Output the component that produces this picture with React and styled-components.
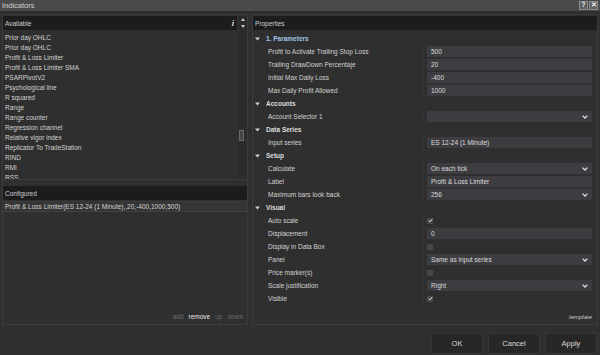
import React from 'react';
import styled, { createGlobalStyle } from 'styled-components';

const Global = createGlobalStyle`
  html, body { margin: 0; padding: 0; background: #2f2f2f; }
  body { font-family: "Liberation Sans", Arial, sans-serif; }
  * { box-sizing: border-box; }
`;

const Window = styled.div`
  width: 600px;
  height: 355px;
  background: #2f2f2f;
  display: flex;
  flex-direction: column;
  overflow: hidden;
  color: #d2d2d2;
  font-size: 6.5px;
`;

const TitleBar = styled.div`
  height: 11px;
  background: #4a4a4a;
  display: flex;
  align-items: center;
  justify-content: space-between;
  padding: 0 2px 0 2px;
`;

const Title = styled.span`
  font-size: 7.5px;
  color: #d2d2d2;
`;

const TitleButtons = styled.div`
  display: flex;
  gap: 1px;
`;

const TitleBtn = styled.div`
  width: 9px;
  height: 9px;
  border: 1px solid #8c8c8c;
  background: #5e5e5e;
  color: #f0f0f0;
  font-size: 6.5px;
  font-weight: bold;
  display: flex;
  align-items: center;
  justify-content: center;
  line-height: 1;
`;

const Main = styled.div`
  display: flex;
  gap: 4px;
  padding: 3px 2px 0 2px;
  height: 314px;
`;

const Panel = styled.div`
  width: ${(p) => p.$w}px;
  border: 1px solid #3b3b3b;
  display: flex;
  flex-direction: column;
  padding: 1px 0 0 0;
`;

const HeaderBar = styled.div`
  height: 14px;
  flex: ${(p) => (p.$grow ? 1 : 'none')};
  background: #1c1c1c;
  color: #cfcfcf;
  display: flex;
  align-items: center;
  justify-content: space-between;
  padding: 0 3px 0 2px;
`;

const HeaderRow = styled.div`
  display: flex;
  gap: 2px;
  height: 14px;
`;

const InfoGlyph = styled.span`
  font-style: italic;
  font-family: "Liberation Serif", serif;
  font-weight: bold;
  font-size: 8px;
  color: #e0e0e0;
`;

const Spinner = styled.div`
  width: 8px;
  display: flex;
  flex-direction: column;
  align-items: center;
  justify-content: space-around;
  background: #2a2a2a;
`;

const ListArea = styled.div`
  height: 150px;
  display: flex;
  border-bottom: 1px solid #3a3a3a;
`;

const ListItems = styled.div`
  flex: 1;
  overflow: hidden;
  padding: 3px 0 0 2px;
`;

const ListItem = styled.div`
  height: 10px;
  line-height: 10px;
  white-space: nowrap;
`;

const ScrollTrack = styled.div`
  width: 9px;
  background: #2c2c2c;
  position: relative;
`;

const ScrollThumb = styled.div`
  position: absolute;
  left: 1px;
  top: 100px;
  width: 5px;
  height: 11px;
  border: 1px solid #6a6a6a;
  background: #444;
`;

const ConfiguredHeader = styled(HeaderBar)`
  margin-top: 6px;
`;

const ConfiguredBox = styled.div`
  flex: 1;
  margin-top: 1px;
  border-top: 1px solid #3a3a3a;
  display: flex;
  flex-direction: column;
`;

const ConfiguredItem = styled.div`
  height: 10px;
  line-height: 10px;
  padding-left: 2px;
  background: #353535;
  border-bottom: 1px solid #414141;
  white-space: nowrap;
`;

const ActionRow = styled.div`
  margin-top: auto;
  display: flex;
  justify-content: flex-end;
  gap: 5px;
  padding: 0 4px 4px 0;
`;

const Action = styled.span`
  color: ${(p) => (p.$active ? '#e6e6e6' : '#6c6c6c')};
`;

const PropGrid = styled.div`
  display: flex;
  flex-direction: column;
  padding-top: 2px;
`;

const Row = styled.div`
  height: 13px;
  display: grid;
  grid-template-columns: 170px 1fr;
`;

const CatRow = styled.div`
  height: 13px;
  display: flex;
  align-items: center;
  gap: 6px;
  padding-left: 2px;
  font-weight: bold;
  color: ${(p) => (p.$accent ? '#a6c3e3' : '#dcdcdc')};
`;

const Label = styled.div`
  padding-left: 15px;
  display: flex;
  align-items: center;
  white-space: nowrap;
`;

const ValueCell = styled.div`
  border-left: 1px solid #363636;
  padding: 1px 5px 1px 3px;
  display: flex;
  align-items: center;
`;

const Input = styled.div`
  flex: 1;
  height: 11px;
  background: #3c3c41;
  display: flex;
  align-items: center;
  justify-content: space-between;
  padding: 0 4px 0 4px;
  color: #dcdcdc;
`;

const Check = styled.div`
  width: 6px;
  height: 6px;
  background: #48484c;
  display: flex;
  align-items: center;
  justify-content: center;
`;

const PanelFoot = styled.div`
  margin-top: auto;
  display: flex;
  justify-content: flex-end;
  padding: 0 5px 4px 0;
  font-style: italic;
  font-size: 6px;
  color: #c8c8c8;
`;

const Footer = styled.div`
  flex: 1;
  display: flex;
  justify-content: flex-end;
  align-items: flex-start;
  gap: 5px;
  padding: 8px 3px 0 0;
`;

const Button = styled.div`
  width: 52px;
  height: 21px;
  background: #272727;
  border: 1px solid #363636;
  display: flex;
  align-items: center;
  justify-content: center;
  font-size: 7.5px;
  color: #d8d8d8;
`;

const Tri = () => (
  <svg width="5" height="4" viewBox="0 0 5 4">
    <path d="M0 0.5 H5 L2.5 3.5 Z" fill="#cfcfcf" />
  </svg>
);

const Chevron = () => (
  <svg width="6" height="4" viewBox="0 0 6 4">
    <path d="M0.6 0.6 L3 3 L5.4 0.6" fill="none" stroke="#e0e0e0" strokeWidth="1.3" />
  </svg>
);

const Tick = () => (
  <svg width="5" height="5" viewBox="0 0 5 5">
    <path d="M0.8 2.6 L2 3.8 L4.3 1.1" fill="none" stroke="#f2f2f2" strokeWidth="1" />
  </svg>
);

const Arrow = ({ up }) => (
  <svg width="4" height="3" viewBox="0 0 4 3">
    <path d={up ? 'M0 3 L2 0 L4 3 Z' : 'M0 0 L2 3 L4 0 Z'} fill="#c8c8c8" />
  </svg>
);

const available = [
  'Prior day OHLC',
  'Prior day OHLC',
  'Profit & Loss Limiter',
  'Profit & Loss Limiter SMA',
  'PSARPivotV2',
  'Psychological line',
  'R squared',
  'Range',
  'Range counter',
  'Regression channel',
  'Relative vigor index',
  'Replicator To TradeStation',
  'RIND',
  'RMI',
  'RSS',
];

const props = [
  { cat: '1. Parameters', accent: true },
  { label: 'Profit to Activate Trailing Stop Loss', type: 'text', value: '500' },
  { label: 'Trailing DrawDown Percentaje', type: 'text', value: '20' },
  { label: 'Initial Max Daily Loss', type: 'text', value: '-400' },
  { label: 'Max Daily Profit Allowed', type: 'text', value: '1000' },
  { cat: 'Accounts' },
  { label: 'Account Selector 1', type: 'select', value: '' },
  { cat: 'Data Series' },
  { label: 'Input series', type: 'text', value: 'ES 12-24 (1 Minute)' },
  { cat: 'Setup' },
  { label: 'Calculate', type: 'select', value: 'On each tick' },
  { label: 'Label', type: 'text', value: 'Profit & Loss Limiter' },
  { label: 'Maximum bars look back', type: 'select', value: '256' },
  { cat: 'Visual' },
  { label: 'Auto scale', type: 'check', value: true },
  { label: 'Displacement', type: 'text', value: '0' },
  { label: 'Display in Data Box', type: 'check', value: false },
  { label: 'Panel', type: 'select', value: 'Same as input series' },
  { label: 'Price marker(s)', type: 'check', value: false },
  { label: 'Scale justification', type: 'select', value: 'Right' },
  { label: 'Visible', type: 'check', value: true },
];

const renderValue = (p) => {
  if (p.type === 'check') {
    return <Check>{p.value && <Tick />}</Check>;
  }
  return (
    <Input>
      <span>{p.value}</span>
      {p.type === 'select' && <Chevron />}
    </Input>
  );
};

export default function App() {
  return (
    <>
      <Global />
      <Window>
        <TitleBar>
          <Title>Indicators</Title>
          <TitleButtons>
            <TitleBtn>?</TitleBtn>
            <TitleBtn>✕</TitleBtn>
          </TitleButtons>
        </TitleBar>
        <Main>
          <Panel $w={246}>
            <HeaderRow>
              <HeaderBar $grow>
                <span>Available</span>
                <InfoGlyph>i</InfoGlyph>
              </HeaderBar>
              <Spinner>
                <Arrow up />
                <Arrow />
              </Spinner>
            </HeaderRow>
            <ListArea>
              <ListItems>
                {available.map((a, i) => (
                  <ListItem key={i}>{a}</ListItem>
                ))}
              </ListItems>
              <ScrollTrack>
                <ScrollThumb />
              </ScrollTrack>
            </ListArea>
            <ConfiguredHeader>
              <span>Configured</span>
            </ConfiguredHeader>
            <ConfiguredBox>
              <ConfiguredItem>Profit &amp; Loss Limiter(ES 12-24 (1 Minute),,20,-400,1000,500)</ConfiguredItem>
              <ActionRow>
                <Action>add</Action>
                <Action $active>remove</Action>
                <Action>up</Action>
                <Action>down</Action>
              </ActionRow>
            </ConfiguredBox>
          </Panel>
          <Panel $w={346}>
            <HeaderBar>
              <span>Properties</span>
            </HeaderBar>
            <PropGrid>
              {props.map((p, i) =>
                p.cat ? (
                  <CatRow key={i} $accent={p.accent}>
                    <Tri />
                    <span>{p.cat}</span>
                  </CatRow>
                ) : (
                  <Row key={i}>
                    <Label>{p.label}</Label>
                    <ValueCell>{renderValue(p)}</ValueCell>
                  </Row>
                )
              )}
            </PropGrid>
            <PanelFoot>template</PanelFoot>
          </Panel>
        </Main>
        <Footer>
          <Button>OK</Button>
          <Button>Cancel</Button>
          <Button>Apply</Button>
        </Footer>
      </Window>
    </>
  );
}
